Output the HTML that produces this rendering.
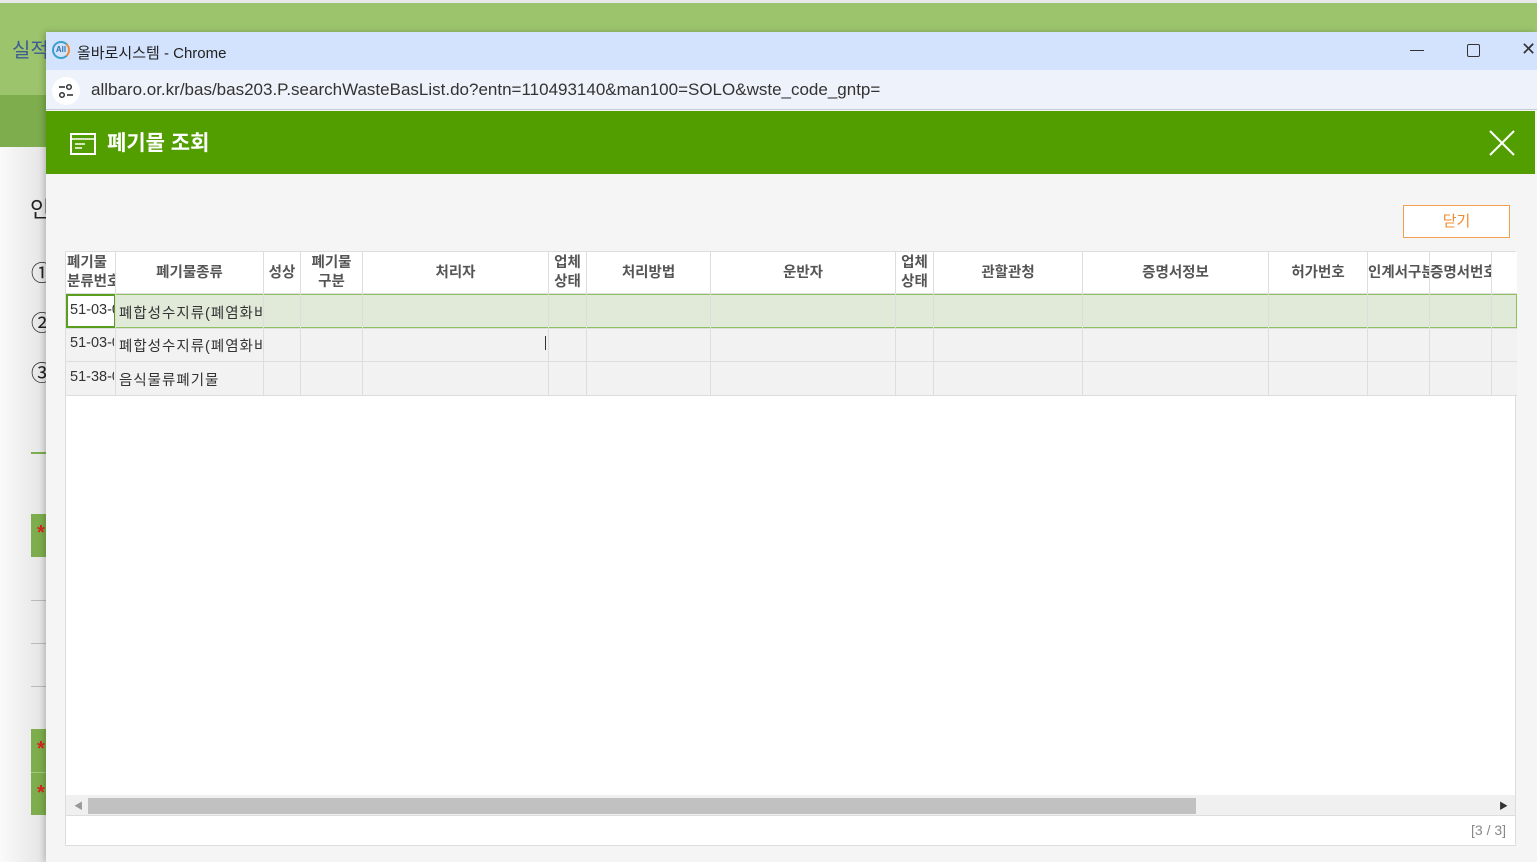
<!DOCTYPE html>
<html><head><meta charset="utf-8"><style>
*{margin:0;padding:0;box-sizing:border-box}
body{width:1537px;height:862px;overflow:hidden;background:#fff;font-family:"Liberation Sans","Noto Sans CJK KR",sans-serif;position:relative}
.abs{position:absolute}
.th{position:absolute;top:0;height:42px;display:flex;align-items:center;justify-content:center;text-align:center;font-size:14.5px;color:#555;font-weight:bold;line-height:19px;border-right:1px solid #ddd;overflow:hidden;white-space:nowrap}
</style></head><body>
<div class="abs" style="left:0;top:0;width:1537px;height:95px;background:#9cc46c"></div>
<div class="abs" style="left:0;top:0;width:1537px;height:3px;background:#e8e8e8"></div>
<div class="abs" style="left:0;top:95px;width:46px;height:52px;background:#7dad4c"></div>
<div class="abs" style="left:12px;top:34px;font-size:20px;color:#3d5c96">실적</div>
<div class="abs" style="left:0;top:147px;width:46px;height:715px;background:linear-gradient(90deg,#fafafa,#e4e4e4)"></div>
<div class="abs" style="left:30px;top:192px;font-size:22px;color:#222">인</div>
<div class="abs" style="left:31px;top:256px;font-size:22px;color:#222">①</div>
<div class="abs" style="left:31px;top:306px;font-size:22px;color:#222">②</div>
<div class="abs" style="left:31px;top:356px;font-size:22px;color:#222">③</div>
<div class="abs" style="left:31px;top:452px;width:15px;height:2px;background:#7dad4c"></div>
<div class="abs" style="left:31px;top:514px;width:15px;height:43px;background:#7dad4c;color:#d22;font-size:20px;padding:8px 0 0 6px;font-weight:bold">*</div>
<div class="abs" style="left:31px;top:600px;width:15px;height:1px;background:#bbb"></div>
<div class="abs" style="left:31px;top:643px;width:15px;height:1px;background:#bbb"></div>
<div class="abs" style="left:31px;top:686px;width:15px;height:1px;background:#bbb"></div>
<div class="abs" style="left:31px;top:729px;width:15px;height:86px;background:#7dad4c"></div>
<div class="abs" style="left:37px;top:738px;color:#d22;font-size:20px;font-weight:bold">*</div>
<div class="abs" style="left:37px;top:782px;color:#d22;font-size:20px;font-weight:bold">*</div>
<div class="abs" style="left:31px;top:772px;width:15px;height:1px;background:#a0c880"></div>
<div class="abs" style="left:46px;top:32px;width:1491px;height:830px;background:#f5f5f5;box-shadow:-2px 0 6px rgba(0,0,0,.2)">
 <div class="abs" style="left:0;top:0;width:1491px;height:38px;background:#d3e3fd"></div>
 <div class="abs" style="left:6px;top:9px;width:18px;height:18px;border-radius:50%;border:2px solid #3aa0d0;border-right-color:#f08a30;font-size:8px;font-weight:bold;color:#2a70b0;text-align:center;line-height:14px">All</div>
 <div class="abs" style="left:31px;top:10px;font-size:15px;color:#222">올바로시스템 - Chrome</div>
 <div class="abs" style="left:1364px;top:18px;width:14px;height:1px;background:#333"></div>
 <div class="abs" style="left:1421px;top:12px;width:13px;height:13px;border:1.5px solid #333;border-radius:2px"></div>
 <div class="abs" style="left:1475px;top:7px;font-size:18px;color:#333">✕</div>
 <div class="abs" style="left:0;top:38px;width:1491px;height:40px;background:#eef2fa;border-bottom:1px solid #c8ccd4"></div>
 <div class="abs" style="left:6px;top:45px;width:28px;height:28px;border-radius:50%;background:#fff"></div>
 <svg class="abs" style="left:12px;top:51px" width="16" height="16"><line x1="1" y1="4" x2="7" y2="4" stroke="#333" stroke-width="1.6"/><circle cx="11" cy="4" r="2.3" fill="none" stroke="#333" stroke-width="1.5"/><line x1="9" y1="12" x2="15" y2="12" stroke="#333" stroke-width="1.6"/><circle cx="4" cy="12" r="2.3" fill="none" stroke="#333" stroke-width="1.5"/></svg>
 <div class="abs" style="left:45px;top:48px;font-size:17px;color:#333">allbaro.or.kr/bas/bas203.P.searchWasteBasList.do?entn=110493140&amp;man100=SOLO&amp;wste_code_gntp=</div>
 <div class="abs" style="left:0;top:79px;width:1489px;height:63px;background:#529e00"></div>
 <svg class="abs" style="left:24px;top:101px" width="26" height="22" viewBox="0 0 26 22"><rect x="1" y="1" width="24" height="20" fill="none" stroke="#fff" stroke-width="2"/><line x1="1" y1="6" x2="25" y2="6" stroke="#fff" stroke-width="1.5"/><line x1="5" y1="11" x2="15" y2="11" stroke="#fff" stroke-width="1.5"/><line x1="5" y1="15" x2="12" y2="15" stroke="#fff" stroke-width="1.5"/></svg>
 <div class="abs" style="left:61px;top:95px;font-size:21px;font-weight:bold;color:#fff">폐기물 조회</div>
 <svg class="abs" style="left:1443px;top:98px" width="26" height="26"><path d="M1 1L25 25M25 1L1 25" stroke="#fff" stroke-width="2"/></svg>
 <div class="abs" style="left:1357px;top:173px;width:107px;height:33px;background:#fff;border:1px solid #f0a050;color:#f08a30;font-size:15px;text-align:center;line-height:31px">닫기</div>
 <div class="abs" style="left:19px;top:219px;width:1451px;height:595px;background:#fff;border:1px solid #ddd">
  <div class="abs" style="left:0;top:0;width:1451px;height:42px;background:#fff;border-bottom:1px solid #ddd"></div>
  <div class="th" style="left:0;width:50px;justify-content:flex-start;text-align:left;padding-left:1px">폐기물<br>분류번호</div>
  <div class="th" style="left:50px;width:148px">폐기물종류</div>
  <div class="th" style="left:198px;width:37px">성상</div>
  <div class="th" style="left:235px;width:62px">폐기물<br>구분</div>
  <div class="th" style="left:297px;width:186px">처리자</div>
  <div class="th" style="left:483px;width:38px">업체<br>상태</div>
  <div class="th" style="left:521px;width:124px">처리방법</div>
  <div class="th" style="left:645px;width:185px">운반자</div>
  <div class="th" style="left:830px;width:38px">업체<br>상태</div>
  <div class="th" style="left:868px;width:149px">관할관청</div>
  <div class="th" style="left:1017px;width:186px">증명서정보</div>
  <div class="th" style="left:1203px;width:99px">허가번호</div>
  <div class="th" style="left:1302px;width:62px;justify-content:flex-start">인계서구분</div>
  <div class="th" style="left:1364px;width:62px;justify-content:flex-start">증명서번호</div>
  <div class="th" style="left:1426px;width:25px;border:0"></div>
  <div class="abs" style="left:0;top:42px;width:1451px;height:101px;background:#f2f2f2"></div>
  <div class="abs" style="left:0;top:42px;width:1451px;height:34px;background:#e1ead9;border:1px solid #8cc060"></div>
  <div class="abs" style="left:0;top:76px;width:1451px;height:1px;background:#ddd"></div>
  <div class="abs" style="left:0;top:109px;width:1451px;height:1px;background:#ddd"></div>
  <div class="abs" style="left:0;top:143px;width:1451px;height:1px;background:#ddd"></div>
  <div class="abs" style="left:0;top:42px;width:50px;height:34px;background:#fff;border:2px solid #5a9e20"></div>
  <div class="abs" style="left:1px;top:42px;width:47px;height:102px;overflow:hidden">
   <div style="position:absolute;left:3px;top:8px;font-size:14.5px;color:#333;white-space:nowrap">51-03-0</div>
   <div style="position:absolute;left:3px;top:41px;font-size:14.5px;color:#333;white-space:nowrap">51-03-0</div>
   <div style="position:absolute;left:3px;top:75px;font-size:14.5px;color:#333;white-space:nowrap">51-38-0</div>
  </div>
  <div class="abs" style="left:49px;top:42px;width:148px;height:102px;overflow:hidden">
   <div style="position:absolute;left:4px;top:8px;font-size:14.5px;color:#333;white-space:nowrap;letter-spacing:1px">폐합성수지류(폐염화비닐</div>
   <div style="position:absolute;left:4px;top:41px;font-size:14.5px;color:#333;white-space:nowrap;letter-spacing:1px">폐합성수지류(폐염화비닐</div>
   <div style="position:absolute;left:4px;top:75px;font-size:14.5px;color:#333;white-space:nowrap;letter-spacing:1px">음식물류폐기물</div>
  </div>
  <div class="abs" style="left:49px;top:42px;width:1px;height:102px;background:#ddd"></div>
  <div class="abs" style="left:197px;top:42px;width:1px;height:102px;background:#ddd"></div>
  <div class="abs" style="left:234px;top:42px;width:1px;height:102px;background:#ddd"></div>
  <div class="abs" style="left:296px;top:42px;width:1px;height:102px;background:#ddd"></div>
  <div class="abs" style="left:482px;top:42px;width:1px;height:102px;background:#ddd"></div>
  <div class="abs" style="left:520px;top:42px;width:1px;height:102px;background:#ddd"></div>
  <div class="abs" style="left:644px;top:42px;width:1px;height:102px;background:#ddd"></div>
  <div class="abs" style="left:829px;top:42px;width:1px;height:102px;background:#ddd"></div>
  <div class="abs" style="left:867px;top:42px;width:1px;height:102px;background:#ddd"></div>
  <div class="abs" style="left:1016px;top:42px;width:1px;height:102px;background:#ddd"></div>
  <div class="abs" style="left:1202px;top:42px;width:1px;height:102px;background:#ddd"></div>
  <div class="abs" style="left:1301px;top:42px;width:1px;height:102px;background:#ddd"></div>
  <div class="abs" style="left:1363px;top:42px;width:1px;height:102px;background:#ddd"></div>
  <div class="abs" style="left:1425px;top:42px;width:1px;height:102px;background:#ddd"></div>
  <div class="abs" style="left:479px;top:84px;width:1px;height:14px;background:#333"></div>
  <div class="abs" style="left:0;top:543px;width:1449px;height:21px;background:#f0f0f0;border-bottom:1px solid #ddd"></div>
  <div class="abs" style="left:22px;top:546px;width:1108px;height:16px;background:#c1c1c1"></div>
  <div class="abs" style="left:8px;top:547px;font-size:9px;color:#999">◀</div>
  <div class="abs" style="left:1433px;top:547px;font-size:9px;color:#333">▶</div>
  <div class="abs" style="left:1405px;top:570px;font-size:14px;color:#888">[3 / 3]</div>
 </div>
</div>
</body></html>
